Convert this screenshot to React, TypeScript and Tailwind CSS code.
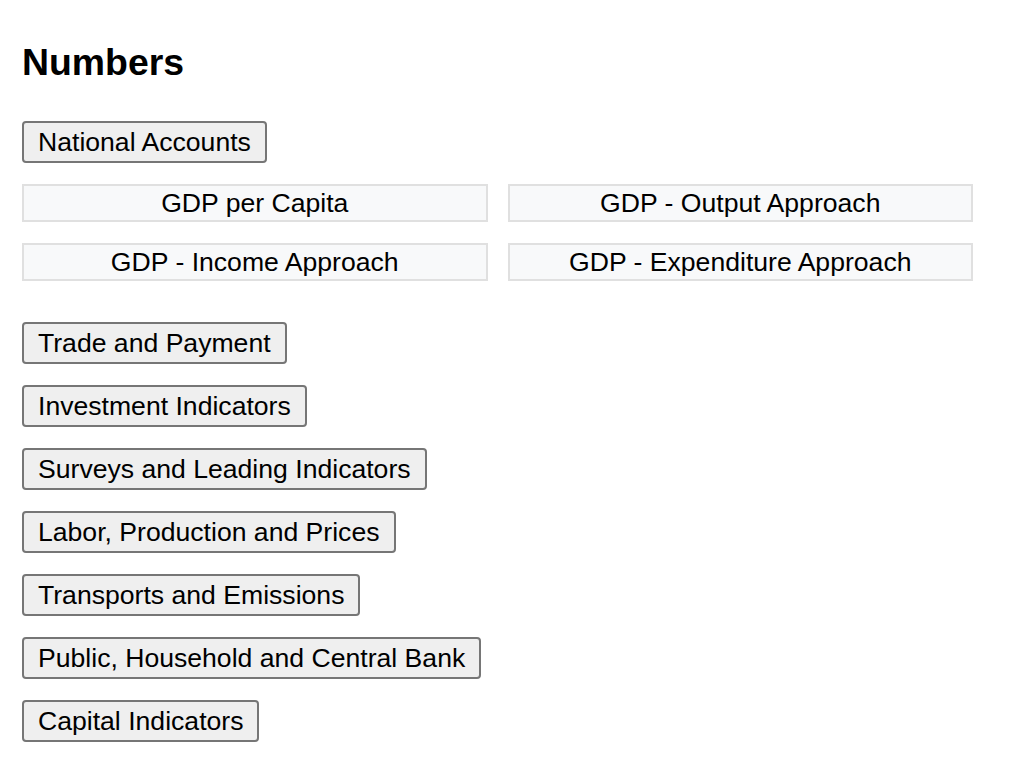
const groups = [
  'Trade and Payment',
  'Investment Indicators',
  'Surveys and Leading Indicators',
  'Labor, Production and Prices',
  'Transports and Emissions',
  'Public, Household and Central Bank',
  'Capital Indicators',
];

const nationalAccounts = [
  'GDP per Capita',
  'GDP - Output Approach',
  'GDP - Income Approach',
  'GDP - Expenditure Approach',
];

const GroupButton = ({ label }: { label: string }) => (
  <button className="h-[42px] rounded-[4px] border-2 border-[#767676] bg-[#efefef] px-[14px] text-[26.6px] leading-none text-black">
    {label}
  </button>
);

const App = () => {
  return (
    <div className="min-h-screen bg-white px-[22px] pt-[41px] font-['Liberation_Sans',Arial,sans-serif] text-black">
      <h1 className="text-[37.4px] font-bold leading-[42px]">Numbers</h1>

      <div className="mt-[38px] flex flex-col items-start">
        <GroupButton label="National Accounts" />
      </div>

      <div className="mt-[21px] grid w-[951px] grid-cols-2 gap-x-[20px] gap-y-[21px]">
        {nationalAccounts.map((item) => (
          <div
            key={item}
            className="flex h-[38px] items-center justify-center border-2 border-[#e0e0e0] bg-[#f8f9fa] text-[26.6px] leading-none"
          >
            {item}
          </div>
        ))}
      </div>

      <div className="mt-[41px] flex flex-col items-start gap-[21px]">
        {groups.map((g) => (
          <GroupButton key={g} label={g} />
        ))}
      </div>
    </div>
  );
};

export default App;
